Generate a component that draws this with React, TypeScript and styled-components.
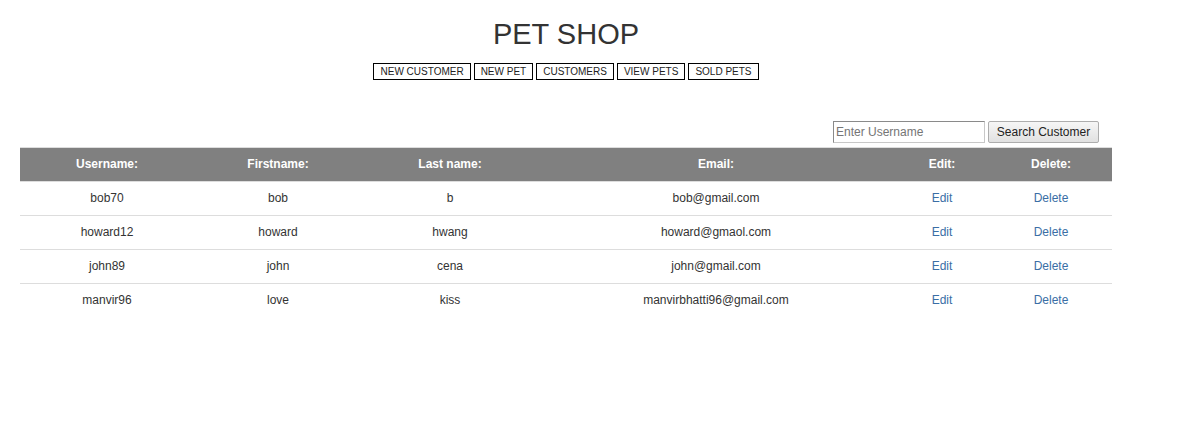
import React from "react";
import styled, { createGlobalStyle } from "styled-components";

const Global = createGlobalStyle`
  html, body { margin: 0; padding: 0; background: #fff; }
  body { font-family: "Liberation Sans", Arial, sans-serif; color: #333; }
`;

const Page = styled.div`
  width: 1092px;
  margin-left: 20px;
  padding-top: 18px;
`;

const Title = styled.h1`
  margin: 0;
  text-align: center;
  font-size: 29px;
  line-height: 32px;
  font-weight: normal;
  color: #333;
`;

const Nav = styled.nav`
  display: flex;
  justify-content: center;
  gap: 3px;
  margin-top: 13px;
`;

const NavButton = styled.a`
  display: block;
  border: 1px solid #000;
  padding: 0 6px;
  height: 15px;
  line-height: 15px;
  font-size: 10px;
  color: #222;
  text-decoration: none;
  text-transform: uppercase;
  background: #fff;
`;

const SearchBar = styled.form`
  display: flex;
  justify-content: flex-end;
  gap: 3px;
  margin-top: 41px;
  margin-right: 13px;
  margin-bottom: 4px;
`;

const SearchInput = styled.input`
  box-sizing: border-box;
  width: 152px;
  height: 22px;
  border: 1px solid #c8c8c8;
  border-top-color: #8a8a8a;
  border-left-color: #8a8a8a;
  padding: 1px 2px;
  font-family: "Liberation Sans", Arial, sans-serif;
  font-size: 12px;
  color: #333;
  &::placeholder { color: #757575; }
`;

const SearchButton = styled.button`
  box-sizing: border-box;
  width: 111px;
  height: 22px;
  border: 1px solid #adadad;
  border-radius: 2px;
  background: linear-gradient(#f6f6f6, #e1e1e1);
  font-family: "Liberation Sans", Arial, sans-serif;
  font-size: 12px;
  color: #222;
  padding: 0;
`;

const Table = styled.table`
  width: 1092px;
  table-layout: fixed;
  border-collapse: collapse;
  border-top: 1px solid #ddd;
  font-size: 12px;
`;

const Th = styled.th`
  background: #808080;
  color: #fff;
  font-weight: bold;
  padding: 8px;
  line-height: 17px;
  text-align: center;
  border-bottom: 1px solid #ddd;
`;

const Td = styled.td`
  padding: 8px;
  line-height: 17px;
  text-align: center;
  color: #333;
  border-top: 1px solid #ddd;
`;

const Link = styled.a`
  color: #3a6ea5;
  text-decoration: none;
`;

const widths = [174, 168, 176, 356, 96, 122];
const heads = ["Username:", "Firstname:", "Last name:", "Email:", "Edit:", "Delete:"];
const rows = [
  ["bob70", "bob", "b", "bob@gmail.com"],
  ["howard12", "howard", "hwang", "howard@gmaol.com"],
  ["john89", "john", "cena", "john@gmail.com"],
  ["manvir96", "love", "kiss", "manvirbhatti96@gmail.com"],
];

export default function App() {
  return (
    <>
      <Global />
      <Page>
        <Title>PET SHOP</Title>
        <Nav>
          {["New Customer", "New Pet", "Customers", "View Pets", "Sold Pets"].map((n) => (
            <NavButton key={n} href="#">{n}</NavButton>
          ))}
        </Nav>
        <SearchBar onSubmit={(e) => e.preventDefault()}>
          <SearchInput placeholder="Enter Username" />
          <SearchButton type="submit">Search Customer</SearchButton>
        </SearchBar>
        <Table>
          <colgroup>
            {widths.map((w, i) => (
              <col key={i} style={{ width: w }} />
            ))}
          </colgroup>
          <thead>
            <tr>
              {heads.map((h) => (
                <Th key={h}>{h}</Th>
              ))}
            </tr>
          </thead>
          <tbody>
            {rows.map((r) => (
              <tr key={r[0]}>
                {r.map((c, i) => (
                  <Td key={i}>{c}</Td>
                ))}
                <Td><Link href="#">Edit</Link></Td>
                <Td><Link href="#">Delete</Link></Td>
              </tr>
            ))}
          </tbody>
        </Table>
      </Page>
    </>
  );
}
